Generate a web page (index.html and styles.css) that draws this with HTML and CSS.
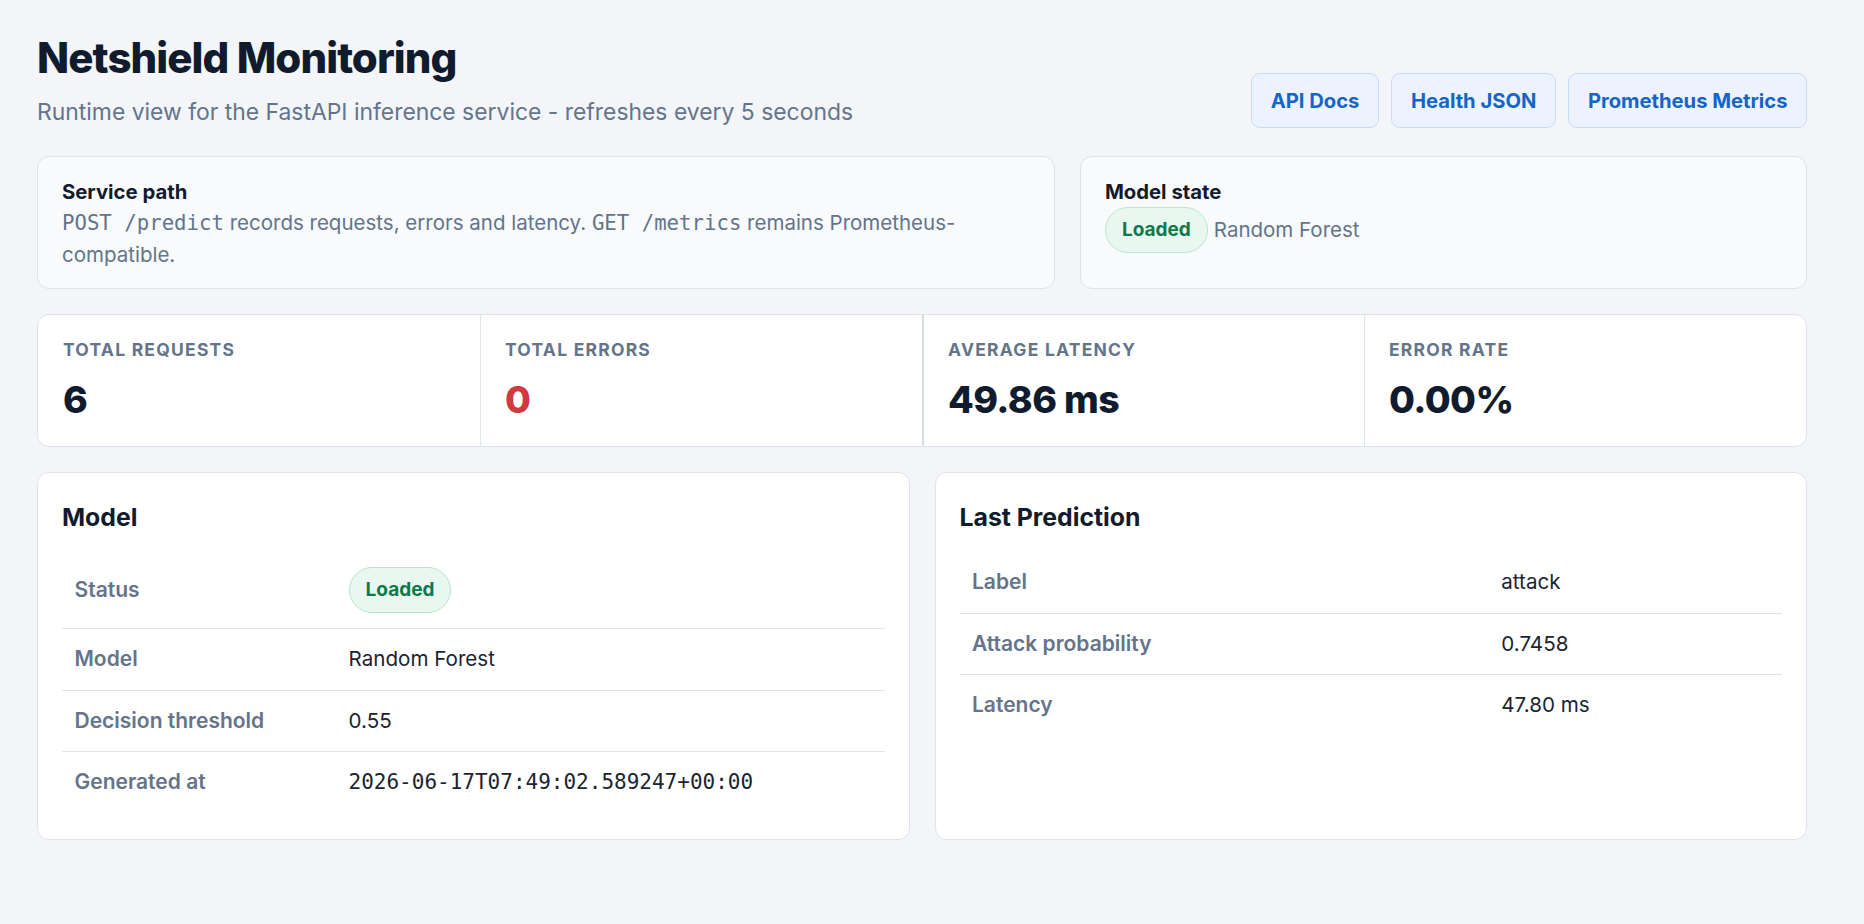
FILE: index.html
```html
<!DOCTYPE html>
<html lang="en">
<head>
<meta charset="utf-8">
<title>Netshield Monitoring</title>
<link rel="stylesheet" href="styles.css">
</head>
<body>
<main class="page">
  <header class="header">
    <div class="header-text">
      <h1 class="title">Netshield Monitoring</h1>
      <p class="subtitle">Runtime view for the FastAPI inference service - refreshes every 5 seconds</p>
    </div>
    <nav class="links">
      <a class="link-btn" href="#">API Docs</a>
      <a class="link-btn" href="#">Health JSON</a>
      <a class="link-btn" href="#">Prometheus Metrics</a>
    </nav>
  </header>

  <section class="info-row">
    <div class="info-card">
      <div class="info-title">Service path</div>
      <p class="info-text"><code class="code">POST /predict</code> records requests, errors and latency. <code class="code">GET /metrics</code> remains Prometheus-compatible.</p>
    </div>
    <div class="info-card">
      <div class="info-title">Model state</div>
      <div class="state-row"><span class="badge">Loaded</span><span class="state-text">Random Forest</span></div>
    </div>
  </section>

  <section class="stats">
    <div class="stat">
      <div class="stat-label">Total requests</div>
      <div class="stat-value">6</div>
    </div>
    <div class="stat">
      <div class="stat-label">Total errors</div>
      <div class="stat-value stat-value-error">0</div>
    </div>
    <div class="stat stat-mid">
      <div class="stat-label">Average latency</div>
      <div class="stat-value">49.86 ms</div>
    </div>
    <div class="stat">
      <div class="stat-label">Error rate</div>
      <div class="stat-value">0.00%</div>
    </div>
  </section>

  <section class="panels">
    <div class="panel">
      <h2 class="panel-title">Model</h2>
      <table class="kv">
        <tr><th>Status</th><td><span class="badge badge-table">Loaded</span></td></tr>
        <tr><th>Model</th><td>Random Forest</td></tr>
        <tr><th>Decision threshold</th><td>0.55</td></tr>
        <tr><th>Generated at</th><td class="mono">2026-06-17T07:49:02.589247+00:00</td></tr>
      </table>
    </div>
    <div class="panel">
      <h2 class="panel-title">Last Prediction</h2>
      <table class="kv">
        <tr><th>Label</th><td>attack</td></tr>
        <tr><th>Attack probability</th><td>0.7458</td></tr>
        <tr><th>Latency</th><td>47.80 ms</td></tr>
      </table>
    </div>
  </section>
</main>
</body>
</html>
```

FILE: styles.css
```css
* { box-sizing: border-box; }

html, body { margin: 0; }

body {
  background: #f3f5f9;
  font-family: Inter, "Noto Sans", "Liberation Sans", sans-serif;
  font-size: 20px;
  line-height: 32px;
  color: #111b2e;
}

.page {
  padding: 32px 57px 40px 37px;
}

.header {
  display: flex;
  justify-content: space-between;
  align-items: flex-end;
  margin-bottom: 26px;
}

.title {
  margin: 0 0 11px;
  font-size: 42px;
  line-height: 51px;
  font-weight: 800;
  letter-spacing: -0.022em;
  color: #111b2e;
}

.subtitle {
  margin: 0;
  font-size: 22.9px;
  line-height: 36px;
  color: #64748b;
}

.links {
  display: flex;
  gap: 12.5px;
  margin-bottom: 2px;
}

.link-btn {
  display: block;
  padding: 10.5px 18.5px;
  font-size: 20.2px;
  line-height: 32px;
  font-weight: 700;
  color: #1565c8;
  background: #edf3fe;
  border: 1px solid #c8dbf6;
  border-radius: 9px;
  text-decoration: none;
}

.info-row {
  display: grid;
  grid-template-columns: 7fr 5fr;
  gap: 25px;
  margin-bottom: 25px;
}

.info-card {
  background: #f8fafc;
  border: 1px solid #dce3ec;
  border-radius: 12px;
  padding: 20px 24px 17px;
}

.info-title {
  font-size: 20.3px;
  font-weight: 700;
  line-height: 30px;
  color: #111b2e;
}

.info-text {
  margin: 0;
  font-size: 20.5px;
  color: #64748b;
  line-height: 32px;
}

.code {
  font-family: "DejaVu Sans Mono", "Liberation Mono", monospace;
  font-size: 20.7px;
}

.state-row {
  display: flex;
  align-items: center;
  gap: 6px;
}

.state-text {
  font-size: 20.5px;
  color: #64748b;
}

.badge {
  display: inline-block;
  padding: 8px 16px;
  font-size: 19px;
  line-height: 28px;
  font-weight: 700;
  color: #0b7a4b;
  background: #e8f7ef;
  border: 1px solid #b9e5cd;
  border-radius: 999px;
}

.badge-table {
  vertical-align: middle;
}

.stats {
  display: grid;
  grid-template-columns: repeat(4, 1fr);
  background: #ffffff;
  border: 1px solid #dde3eb;
  border-radius: 12px;
  margin-bottom: 25px;
}

.stat {
  padding: 22px 24px 24px;
  border-left: 1px solid #e1e6ee;
}

.stat:first-child {
  border-left: none;
  padding-left: 25px;
}

.stat-mid {
  border-left: 2px solid #d7dde6;
}

.stat-label {
  font-size: 17.5px;
  line-height: 26px;
  font-weight: 700;
  letter-spacing: 0.07em;
  text-transform: uppercase;
  color: #64748b;
}

.stat-value {
  margin-top: 14px;
  font-size: 37.5px;
  line-height: 45px;
  font-weight: 800;
  letter-spacing: -0.015em;
  color: #111b2e;
}

.stat-value-error {
  color: #d13a3f;
}

.panels {
  display: grid;
  grid-template-columns: 1fr 1fr;
  gap: 25px;
}

.panel {
  background: #ffffff;
  border: 1px solid #dde3eb;
  border-radius: 12px;
  padding: 26px 24px 26px;
}

.panel-title {
  margin: 0 0 17px;
  font-size: 24.8px;
  line-height: 36px;
  font-weight: 700;
  color: #111b2e;
}

.kv {
  width: 100%;
  border-collapse: collapse;
}

.kv th,
.kv td {
  padding: 15px 12.5px;
  text-align: left;
  line-height: 30.5px;
  vertical-align: middle;
  border-bottom: 1px solid #dfe4eb;
}

.kv tr:last-child th,
.kv tr:last-child td {
  border-bottom: none;
}

.kv th {
  font-size: 21px;
  font-weight: 600;
  color: #64748b;
}

.kv td {
  font-size: 20.6px;
  font-weight: 400;
  color: #1b2433;
}

.kv .mono {
  font-family: "DejaVu Sans Mono", "Liberation Mono", monospace;
  font-size: 21px;
}
```
